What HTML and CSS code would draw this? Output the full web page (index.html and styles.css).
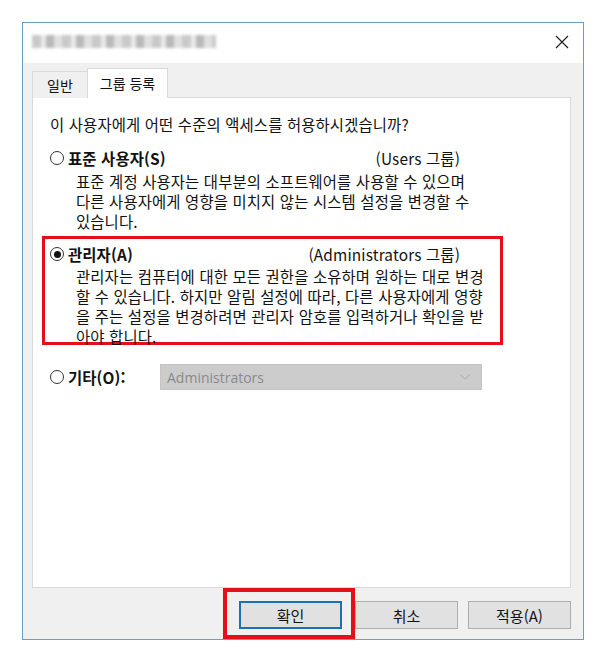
FILE: index.html
```html
<!DOCTYPE html>
<html lang="ko">
<head>
  <meta charset="UTF-8">
  <title>속성</title>
  <link rel="stylesheet" href="styles.css">
</head>
<body>
  <div class="window">
    <!-- Title bar -->
    <div class="titlebar">
      <div class="title-blur"></div>
      <svg class="close" width="14" height="14" viewBox="0 0 14 14">
        <path d="M1 1 L13 13 M13 1 L1 13" stroke="#222" stroke-width="1.2" fill="none"/>
      </svg>
    </div>

    <div class="body">
      <div class="tabs">
        <div class="tab">일반</div>
        <div class="tab active">그룹 등록</div>
      </div>

      <div class="panel">
        <p class="question">이 사용자에게 어떤 수준의 액세스를 허용하시겠습니까?</p>

        <div class="option std">
          <div class="opt-head">
            <span class="radio"></span>
            <span class="opt-label">표준 사용자(S)</span>
            <span class="opt-group">(Users 그룹)</span>
          </div>
          <div class="opt-desc">
            표준 계정 사용자는 대부분의 소프트웨어를 사용할 수 있으며<br>
            다른 사용자에게 영향을 미치지 않는 시스템 설정을 변경할 수<br>
            있습니다.
          </div>
        </div>

        <div class="option admin">
          <div class="opt-head">
            <span class="radio checked"></span>
            <span class="opt-label">관리자(A)</span>
            <span class="opt-group">(Administrators 그룹)</span>
          </div>
          <div class="opt-desc">
            관리자는 컴퓨터에 대한 모든 권한을 소유하며 원하는 대로 변경<br>
            할 수 있습니다. 하지만 알림 설정에 따라, 다른 사용자에게 영향<br>
            을 주는 설정을 변경하려면 관리자 암호를 입력하거나 확인을 받<br>
            아야 합니다.
          </div>
        </div>

        <div class="other">
          <span class="radio"></span>
          <span class="opt-label other-label">기타(O):</span>
          <div class="select">
            <span>Administrators</span>
            <svg width="12" height="8" viewBox="0 0 12 8">
              <path d="M1 1.5 L6 6 L11 1.5" stroke="#aaa" stroke-width="1" fill="none"/>
            </svg>
          </div>
        </div>
      </div>

      <div class="buttons">
        <div class="btn-wrap highlight">
          <button class="btn default">확인</button>
        </div>
        <button class="btn">취소</button>
        <button class="btn">적용(A)</button>
      </div>
    </div>
  </div>
</body>
</html>
```

FILE: styles.css
```css
* {
  box-sizing: border-box;
}

body {
  margin: 0;
  background: #fff;
  font-family: "Noto Sans CJK KR", "Noto Sans", sans-serif;
  color: #111;
}

.window {
  margin: 22px 0 0 22px;
  width: 562px;
  height: 618px;
  border: 1px solid #6c9fbd;
  display: flex;
  flex-direction: column;
}

/* Title bar */
.titlebar {
  height: 40px;
  background: #fff;
  display: flex;
  align-items: center;
  justify-content: space-between;
  padding: 0 14px 3px 9px;
}

.title-blur {
  width: 184px;
  height: 13px;
  background:
    repeating-linear-gradient(90deg, #b8b8b8 0 9px, #e4e4e4 9px 14px, #a2a2a2 14px 22px, #d6d6d6 22px 30px);
  filter: blur(1.5px);
  opacity: 0.75;
}

.body {
  flex: 1;
  background: #f0f0f0;
  padding: 5px 12px 0 9px;
}

/* Tabs */
.tabs {
  display: flex;
  align-items: flex-end;
  height: 30px;
}

.tab {
  height: 27px;
  padding: 0 14px;
  font-size: 14px;
  line-height: 26px;
  border: 1px solid #d9d9d9;
  border-bottom: none;
  background: #f0f0f0;
}

.tab.active {
  height: 30px;
  line-height: 28px;
  padding: 0 12px;
  background: #fff;
  margin-left: -1px;
  position: relative;
  z-index: 1;
}

/* Panel */
.panel {
  height: 491px;
  margin-top: -1px;
  background: #fff;
  border: 1px solid #d9d9d9;
  padding: 16px 0 0 9px;
  font-size: 15.4px;
  letter-spacing: 0.15px;
}

.question {
  margin: 0 0 14px 8px;
  line-height: 20px;
}

.option {
  white-space: nowrap;
}

.opt-head {
  display: flex;
  align-items: center;
  width: 410px;
  height: 20px;
}

.radio {
  width: 14px;
  height: 14px;
  border: 1px solid #333;
  border-radius: 50%;
  background: #fff;
  display: inline-flex;
  align-items: center;
  justify-content: center;
  flex-shrink: 0;
}

.radio.checked::after {
  content: "";
  width: 7px;
  height: 7px;
  border-radius: 50%;
  background: #111;
}

.opt-label {
  font-weight: bold;
  margin-left: 4px;
}

.opt-group {
  margin-left: auto;
}

.opt-desc {
  padding-left: 26px;
  line-height: 20px;
}

.option.std {
  padding-left: 8px;
}

.option.std .opt-desc {
  margin-top: 3px;
}

.option.admin {
  width: 461px;
  height: 109px;
  margin-top: 5px;
  border: 3px solid #e3101b;
  padding: 5px 0 0 5px;
}

.option.admin .opt-desc {
  margin-top: 2px;
}

/* Other row */
.other {
  display: flex;
  align-items: center;
  margin-top: 19px;
  padding-left: 8px;
}

.other-label {
  width: 92px;
}

.select {
  width: 322px;
  height: 26px;
  background: #cccccc;
  border: 1px solid #c4c4c4;
  display: flex;
  align-items: center;
  justify-content: space-between;
  padding: 0 10px 0 6px;
  color: #8a8a8a;
  font-family: "Open Sans", "Noto Sans", sans-serif;
  font-size: 14px;
  letter-spacing: 0;
}

/* Buttons */
.buttons {
  display: flex;
  justify-content: flex-end;
  align-items: center;
  gap: 10px;
  margin-top: 13px;
}

.btn {
  width: 103px;
  height: 28px;
  background: #e1e1e1;
  border: 1px solid #adadad;
  font-family: "Noto Sans CJK KR", "Noto Sans", sans-serif;
  font-size: 15px;
  color: #111;
  padding: 0;
}

.btn.default {
  border: 2px solid #1f6fb5;
}

.btn-wrap {
  position: relative;
  display: flex;
  margin-right: 3px;
}

/* red callout drawn over the OK button */
.btn-wrap.highlight::after {
  content: "";
  position: absolute;
  top: -13px;
  bottom: -10px;
  left: -16px;
  right: -13px;
  border: 4px solid #e3101b;
  pointer-events: none;
}
```
